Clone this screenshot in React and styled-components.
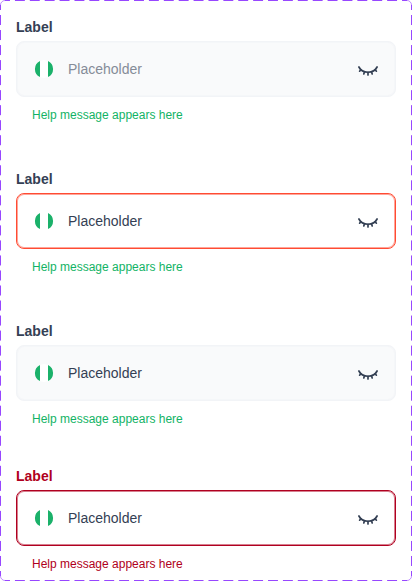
import React, { useId } from "react";
import styled, { createGlobalStyle } from "styled-components";

const GlobalStyle = createGlobalStyle`
  *, *::before, *::after { box-sizing: border-box; }
  body { margin: 0; background: #fff; font-family: "Liberation Sans", Arial, sans-serif; }
`;

const Board = styled.main`
  position: relative;
  display: flex;
  flex-direction: column;
  padding: 17px 16px 7px;
`;

const OutlineDrawing = styled.svg`
  position: absolute;
  inset: 0;
  width: 100%;
  height: 100%;
  pointer-events: none;
  fill: none;
  stroke: #9747ff;
`;

const FieldGroup = styled.div`
  display: flex;
  flex-direction: column;
  margin-bottom: ${({ $gap }) => $gap}px;
`;

const Label = styled.label`
  align-self: flex-start;
  margin-bottom: 4px;
  font-size: 14px;
  font-weight: 700;
  line-height: 20px;
  color: ${({ $error }) => ($error ? "#b00020" : "#344054")};
`;

const boxColors = {
  rest: { border: "#f2f4f7", inner: "#f2f4f780", background: "#f9fafb" },
  focus: { border: "#ff4b33", inner: "#ff4b3380", background: "#fff" },
  error: { border: "#b00020", inner: "#b0002080", background: "#fff" },
};

const InputBox = styled.div`
  display: flex;
  align-items: center;
  height: 56px;
  padding: 0 15px;
  border: 1px solid ${({ $tone }) => boxColors[$tone].border};
  border-radius: 8px;
  background: ${({ $tone }) => boxColors[$tone].background};
  box-shadow: inset 0 0 0 1px ${({ $tone }) => boxColors[$tone].inner};
`;

const Flag = styled.svg`
  flex: none;
  width: 24px;
  height: 24px;
`;

const TextInput = styled.input`
  flex: 1;
  min-width: 0;
  margin: 0 12px;
  padding: 0;
  border: 0;
  outline: 0;
  background: transparent;
  font: 400 14px/20px "Liberation Sans", Arial, sans-serif;
  color: #344054;

  &::placeholder {
    color: #858c98;
    opacity: 1;
  }
`;

const RevealButton = styled.button`
  flex: none;
  display: flex;
  padding: 0;
  border: 0;
  background: none;
  cursor: pointer;
`;

const HelpText = styled.p`
  margin: 8px 16px 0;
  font-size: 12px;
  line-height: 20px;
  color: ${({ $error }) => ($error ? "#b00020" : "#12b365")};
`;

function DashedOutline() {
  return (
    <OutlineDrawing viewBox="0 0 412 581" preserveAspectRatio="none" aria-hidden="true">
      <g strokeDasharray="10 5" strokeDashoffset="5">
        <path pathLength="405" d="M5 0.5 H407" />
        <path pathLength="405" d="M5 580.5 H407" />
        <path pathLength="570" d="M0.5 5 V576" />
        <path pathLength="570" d="M411.5 5 V576" />
      </g>
      <path
        strokeOpacity="0.6"
        d="M0.5 5 A4.5 4.5 0 0 1 5 0.5 M407 0.5 A4.5 4.5 0 0 1 411.5 5 M411.5 576 A4.5 4.5 0 0 1 407 580.5 M5 580.5 A4.5 4.5 0 0 1 0.5 576"
      />
    </OutlineDrawing>
  );
}

function NigeriaFlag() {
  return (
    <Flag viewBox="0 0 24 24" aria-hidden="true">
      <circle cx="12" cy="12" r="9" fill="#fff" />
      <path d="M8 3.9 A9 9 0 0 0 8 20.1 Z M16 3.9 A9 9 0 0 1 16 20.1 Z" fill="#1bb16a" />
    </Flag>
  );
}

function ClosedEye() {
  return (
    <svg width="24" height="24" viewBox="0 0 24 24" fill="none" stroke="#344054" strokeWidth="1.7" strokeLinecap="round" aria-hidden="true">
      <path d="M2.9 10 C6.4 17 17.6 17 21.1 10" />
      <path d="M5 12.6 L3.6 14.2 M8.5 14.8 L7.8 16.9 M12 15.4 V17.9 M15.5 14.8 L16.2 16.9 M19 12.6 L20.4 14.2" />
    </svg>
  );
}

function Field({ tone = "rest", value, gap = 0 }) {
  const id = useId();
  const error = tone === "error";
  return (
    <FieldGroup $gap={gap}>
      <Label htmlFor={id} $error={error}>Label</Label>
      <InputBox $tone={tone}>
        <NigeriaFlag />
        <TextInput id={id} type="text" placeholder="Placeholder" defaultValue={value} aria-invalid={error} aria-describedby={`${id}-help`} />
        <RevealButton type="button" aria-label="Show value">
          <ClosedEye />
        </RevealButton>
      </InputBox>
      <HelpText id={`${id}-help`} $error={error}>Help message appears here</HelpText>
    </FieldGroup>
  );
}

export default function App() {
  return (
    <>
      <GlobalStyle />
      <Board>
        <Field gap={44} />
        <Field tone="focus" value="Placeholder" gap={44} />
        <Field value="Placeholder" gap={37} />
        <Field tone="error" value="Placeholder" />
        <DashedOutline />
      </Board>
    </>
  );
}
